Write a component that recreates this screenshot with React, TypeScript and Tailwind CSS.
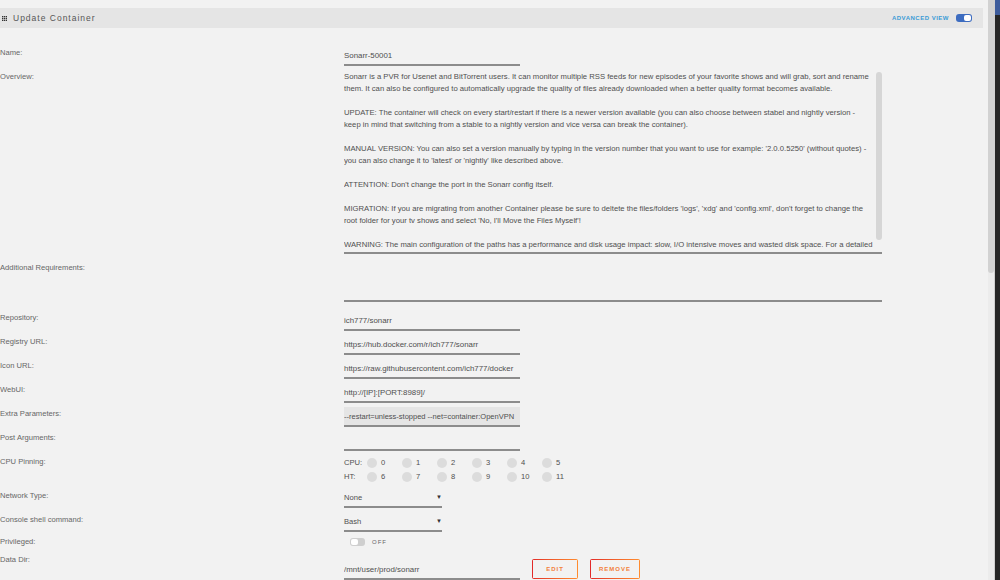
import React from 'react';

const overviewLines: string[][] = [
  [
    'Sonarr is a PVR for Usenet and BitTorrent users. It can monitor multiple RSS feeds for new episodes of your favorite shows and will grab, sort and rename',
    'them. It can also be configured to automatically upgrade the quality of files already downloaded when a better quality format becomes available.',
  ],
  [
    'UPDATE: The container will check on every start/restart if there is a newer version available (you can also choose between stabel and nightly version -',
    'keep in mind that switching from a stable to a nightly version and vice versa can break the container).',
  ],
  [
    "MANUAL VERSION: You can also set a version manually by typing in the version number that you want to use for example: '2.0.0.5250' (without quotes) -",
    "you can also change it to 'latest' or 'nightly' like described above.",
  ],
  ["ATTENTION: Don't change the port in the Sonarr config itself."],
  [
    "MIGRATION: If you are migrating from another Container please be sure to deltete the files/folders 'logs', 'xdg' and 'config.xml', don't forget to change the",
    "root folder for your tv shows and select 'No, I'll Move the Files Myself'!",
  ],
  [
    'WARNING: The main configuration of the paths has a performance and disk usage impact: slow, I/O intensive moves and wasted disk space. For a detailed',
  ],
];

const textInputs = [
  { label: 'Repository:', value: 'ich777/sonarr' },
  { label: 'Registry URL:', value: 'https://hub.docker.com/r/ich777/sonarr' },
  { label: 'Icon URL:', value: 'https://raw.githubusercontent.com/ich777/docker' },
  { label: 'WebUI:', value: 'http://[IP]:[PORT:8989]/' },
  { label: 'Extra Parameters:', value: '--restart=unless-stopped --net=container:OpenVPN', shaded: true },
  { label: 'Post Arguments:', value: '' },
];

const Label: React.FC<{ children: React.ReactNode }> = ({ children }) => (
  <div className="w-[344px] shrink-0 pt-[1px] text-[7.6px] leading-[14px] text-[#666]">{children}</div>
);

const TextInput: React.FC<{ value: string; shaded?: boolean }> = ({ value, shaded }) => (
  <div
    className={`w-[176px] h-[20px] mt-[1px] flex items-center pt-[1px] overflow-hidden whitespace-nowrap border-b-2 border-[#8c8c8c] text-[#4f4f4f] ${
      shaded ? 'bg-[#e5e5e5] text-[7.5px]' : 'text-[7.9px]'
    }`}
  >
    {value}
  </div>
);

const Select: React.FC<{ value: string }> = ({ value }) => (
  <div className="w-[98px] h-[19px] flex items-center justify-between border-b-2 border-[#8c8c8c] text-[7.6px] text-[#4f4f4f]">
    <span>{value}</span>
    <span className="text-[6px] text-[#333]">▼</span>
  </div>
);

const CpuRow: React.FC<{ title: string; cores: string[] }> = ({ title, cores }) => (
  <div className="flex items-center h-[14px] text-[7.6px] text-[#4f4f4f]">
    <span className="w-[23px]">{title}</span>
    {cores.map((c) => (
      <span key={c} className="w-[35px] flex items-center gap-[4px]">
        <span className="w-[10px] h-[10px] rounded-full bg-[#dcdcdc]" />
        <span>{c}</span>
      </span>
    ))}
  </div>
);

const GradientButton: React.FC<{ text: string; width: string }> = ({ text, width }) => (
  <div className={`${width} h-[20px] p-[1px] rounded-[2px] bg-gradient-to-r from-[#e22828] to-[#ff8c2f]`}>
    <div className="w-full h-full bg-[#f2f2f2] flex items-center justify-center text-[6px] font-bold tracking-[1px] text-[#f3803a]">
      {text}
    </div>
  </div>
);

export default function App() {
  return (
    <div className="w-[1000px] h-[580px] overflow-hidden flex bg-[#f2f2f2]" style={{ fontFamily: '"Liberation Sans", Arial, sans-serif' }}>
      {/* page content */}
      <div className="flex-1 pt-[8px] pr-[5px]">
        <div className="h-[20px] bg-[#e5e5e5] flex items-center justify-between pl-[2px] pr-[11px]">
          <div className="flex items-center gap-[6px]">
            <svg width="5" height="5" viewBox="0 0 5 5" className="text-[#333]">
              {[0, 2, 4].map((y) =>
                [0, 2, 4].map((x) => <rect key={`${x}-${y}`} x={x} y={y} width="1.4" height="1.4" fill="currentColor" />)
              )}
            </svg>
            <span className="text-[8.5px] tracking-[1px] text-[#555]">Update Container</span>
          </div>
          <div className="flex items-center gap-[7px]">
            <span className="text-[6px] font-bold tracking-[0.5px] text-[#3b9bd6]">ADVANCED VIEW</span>
            <span className="w-[16px] h-[8px] rounded-[3px] bg-[#3d6cc0] flex items-center justify-end p-[1px]">
              <span className="w-[7px] h-[6px] rounded-[2px] bg-white" />
            </span>
          </div>
        </div>

        <div className="pt-[17px]">
          {/* Name */}
          <div className="flex h-[24px]">
            <Label>Name:</Label>
            <TextInput value="Sonarr-50001" />
          </div>

          {/* Overview */}
          <div className="flex h-[191px]">
            <Label>Overview:</Label>
            <div className="mt-[1px] w-[538px] h-[184px] flex border-b-2 border-[#8c8c8c]">
              <div className="flex-1 overflow-hidden pt-[1px] text-[7.7px] leading-[12px] text-[#4f4f4f] whitespace-nowrap">
                {overviewLines.map((para, i) => (
                  <div key={i} className="mb-[12px]">
                    {para.map((line) => (
                      <div key={line}>{line}</div>
                    ))}
                  </div>
                ))}
              </div>
              <div className="w-[6px] pt-[2px] pb-[12px]">
                <div className="h-full rounded-full bg-[#d6d6d6]" />
              </div>
            </div>
          </div>

          {/* Additional Requirements */}
          <div className="flex h-[50px]">
            <Label>Additional Requirements:</Label>
            <div className="w-[538px] h-[42px] border-b-2 border-[#8c8c8c]" />
          </div>

          {textInputs.map((f) => (
            <div key={f.label} className="flex h-[24px]">
              <Label>{f.label}</Label>
              <TextInput value={f.value} shaded={f.shaded} />
            </div>
          ))}

          {/* CPU Pinning */}
          <div className="flex h-[34px]">
            <Label>CPU Pinning:</Label>
            <div className="pt-[2px]">
              <CpuRow title="CPU:" cores={['0', '1', '2', '3', '4', '5']} />
              <CpuRow title="HT:" cores={['6', '7', '8', '9', '10', '11']} />
            </div>
          </div>

          <div className="flex h-[24px]">
            <Label>Network Type:</Label>
            <div className="pt-[1px]">
              <Select value="None" />
            </div>
          </div>

          <div className="flex h-[22px]">
            <Label>Console shell command:</Label>
            <div className="pt-[1px]">
              <Select value="Bash" />
            </div>
          </div>

          <div className="flex h-[18px]">
            <Label>Privileged:</Label>
            <div className="flex items-center gap-[7px] pl-[6px] h-[16px]">
              <span className="w-[15px] h-[8px] rounded-[3px] bg-[#cfcfcf] flex items-center p-[1px]">
                <span className="w-[7px] h-[6px] rounded-[2px] bg-white" />
              </span>
              <span className="text-[6px] tracking-[1px] text-[#666]">OFF</span>
            </div>
          </div>

          <div className="flex">
            <Label>Data Dir:</Label>
            <div className="flex items-start gap-[12px] pt-[7px]">
              <TextInput value="/mnt/user/prod/sonarr" />
              <GradientButton text="EDIT" width="w-[46px]" />
              <GradientButton text="REMOVE" width="w-[50px]" />
            </div>
          </div>
        </div>
      </div>

      {/* window scrollbar */}
      <div className="w-[7px] bg-[#ececec] border-r border-[#d0d0d0]">
        <div className="h-[273px] rounded-b-[3px] bg-[#d2d2d2]" />
      </div>
      <div className="w-[5px] bg-[#262626] flex flex-col">
        <div className="h-[15px] bg-[#3d5c9c]" />
      </div>
    </div>
  );
}
